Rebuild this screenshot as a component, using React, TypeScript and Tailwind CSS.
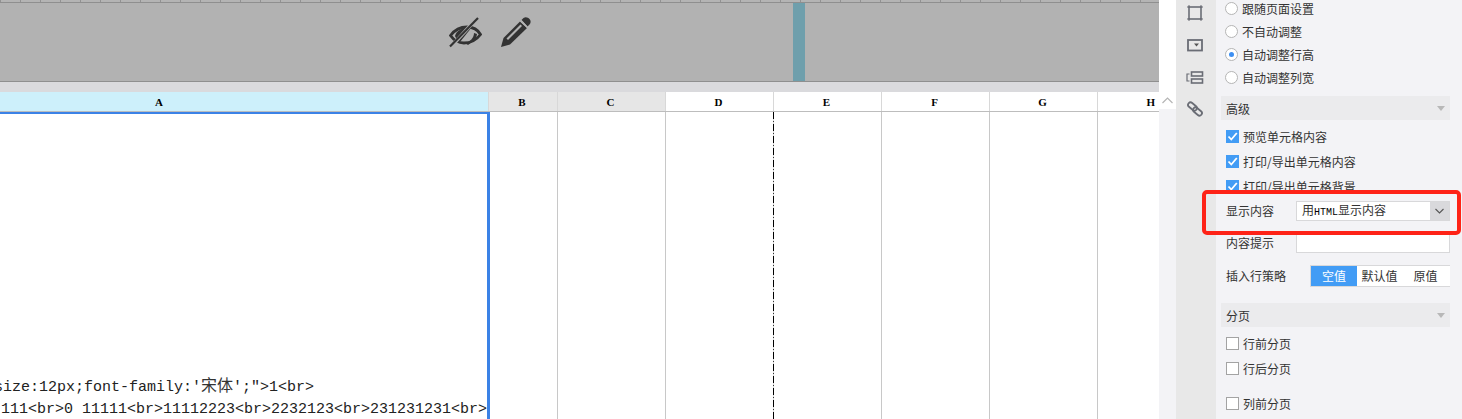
import React from "react";

const mono = "font-['Liberation_Mono','Noto_Sans_CJK_SC',monospace]";
const serif = "font-['Liberation_Serif','Noto_Sans_CJK_SC',serif]";

function Radio({ label, on }: { label: string; on?: boolean }) {
  return (
    <div className="flex h-[23px] items-center">
      <span className="mr-[4px] flex h-[13px] w-[13px] items-center justify-center rounded-full border border-[#b5b5b5] bg-white">
        {on && <span className="h-[5px] w-[5px] rounded-full bg-[#3d8ff2]" />}
      </span>
      <span>{label}</span>
    </div>
  );
}

function Check({ label, on }: { label: string; on?: boolean }) {
  return (
    <div className="flex h-[25px] items-center">
      <span className={`mr-[4px] flex h-[13px] w-[13px] items-center justify-center ${on ? "bg-[#429cf5]" : "border border-[#a3a3a3] bg-white"}`}>
        {on && (
          <svg width="11" height="11" viewBox="0 0 11 11">
            <path d="M1.5 5.5 L4.3 8.5 L9.8 2" fill="none" stroke="#fff" strokeWidth="1.8" />
          </svg>
        )}
      </span>
      <span>{label}</span>
    </div>
  );
}

function Section({ label }: { label: string }) {
  return (
    <div className="flex h-[24px] w-[229px] items-center justify-between bg-[#ebebed] px-[5px]">
      <span className="pt-[1px]">{label}</span>
      <span className="h-0 w-0 border-x-[4px] border-t-[5px] border-x-transparent border-t-[#b8b8b8]" />
    </div>
  );
}

const cols: [string, number, string][] = [
  ["B", 69, "bg-[#e6e6e6]"],
  ["C", 108, "bg-[#e6e6e6]"],
  ["D", 108, "bg-white"],
  ["E", 108, "bg-white"],
  ["F", 108, "bg-white"],
  ["G", 108, "bg-white"],
];

export default function App() {
  return (
    <div className="relative flex h-[419px] w-[1462px] overflow-hidden bg-white font-['Noto_Sans_CJK_SC',sans-serif] text-[12px] text-[#333]">
      {/* Sheet area */}
      <div className="flex w-[1159px] flex-col">
        <div className="h-[3px] border-b border-[#8f8f8f] bg-[repeating-linear-gradient(90deg,#929292_0,#929292_1px,#b4b4b4_1px,#b4b4b4_20px)]" />
        <div className="flex h-[79px] border-b border-[#8f8f8f] bg-[#b2b2b2]">
          <div className="flex w-[793px] items-start pl-[449px] pt-[14px]">
            <svg width="33" height="31" viewBox="0 0 33 31" className="mr-[18px]">
              <path d="M1.5 18.5 C6 12.5 12 10 18 10 C24 10 29 13 31.5 17.5 C27 23.5 22 26 15 26 C9 26 5 23.5 1.5 18.5Z" fill="none" stroke="#333" strokeWidth="2.8" />
              <path d="M6 19 C7 14 13 10 23 10 L11 25 C8 23 7 21 6 19Z" fill="#333" />
              <path d="M16 26 C21 25 25 21 25 16 L28 17 L27 22 L19 28Z" fill="#333" />
              <path d="M-1 33 L30 -1" stroke="#b2b2b2" strokeWidth="3.6" />
              <path d="M1 29.5 L29 1" stroke="#333" strokeWidth="2.2" />
            </svg>
            <svg width="31" height="31" viewBox="0 0 31 31">
              <path d="M1 30 L3.5 21 L20 4.5 L27 11 L10 27.5 Z" fill="#333" />
              <path d="M6.5 21.5 L20.5 7.5 L22 9 L8 23 Z" fill="#b2b2b2" />
              <path d="M21.5 3 L23.5 1 C25.5 -.5 28 .3 29.5 2 C31 3.5 31 6 29.5 7.5 L27.5 9.5 Z" fill="#333" />
              <path d="M20 4.5 L21.5 3 L27.5 9.5 L27 11Z" fill="#b2b2b2" />
            </svg>
          </div>
          <div className="w-[12px] bg-[#6f9fac]" />
          <div className="flex-1" />
        </div>
        <div className="h-[10px] bg-[#dadadd]" />
        <div className={`flex h-[20px] border-b border-[#bdbdbd] text-[11px] font-bold leading-[20px] text-black ${serif}`}>
          <div className="w-[489px] border-r border-[#d8d8d8] bg-[#cdf0fb] pl-[155px]">A</div>
          {cols.map(([name, w, bg]) => (
            <div key={name} style={{ width: w }} className={`${bg} border-r border-[#d8d8d8] pr-[2px] text-center`}>
              {name}
            </div>
          ))}
          <div className="flex-1 pr-[4px] text-right">H</div>
        </div>
        <div className="relative flex flex-1">
          <div className={`flex w-[490px] flex-col justify-end overflow-hidden border-r-[3px] border-t-[2px] border-[#3b82e6] text-[15px] leading-[22px] text-[#222] ${mono}`}>
            <div className="-ml-[6px] whitespace-nowrap">
              size:12px;font-family:'<span className="text-[16px] text-[#333]">宋体</span>';"&gt;1&lt;br&gt;
            </div>
            <div className="-mb-[2px] flex justify-end whitespace-nowrap">
              111&lt;br&gt;0 11111&lt;br&gt;11112223&lt;br&gt;2232123&lt;br&gt;231231231&lt;br&gt;
            </div>
          </div>
          <div className="w-[68px] border-r border-[#c8c8c8]" />
          <div className="w-[108px] border-r border-[#c8c8c8]" />
          <div className="w-[108px] bg-[repeating-linear-gradient(180deg,#000_0,#000_7px,#d8d8d8_7px,#d8d8d8_9px,#333_9px,#333_10px,#d8d8d8_10px,#d8d8d8_12px)] bg-[length:1px_100%] bg-right bg-no-repeat" />
          <div className="w-[108px] border-r border-[#c8c8c8]" />
          <div className="w-[108px] border-r border-[#c8c8c8]" />
          <div className="w-[108px] border-r border-[#c8c8c8]" />
        </div>
      </div>

      {/* Scrollbar */}
      <div className="flex w-[17px] flex-col pt-[92px]">
        <div className="flex h-[17px] items-center justify-center bg-white">
          <svg width="11" height="7" viewBox="0 0 11 7">
            <path d="M.5 6 L5.5 1 L10.5 6" fill="none" stroke="#b5b5b5" strokeWidth="1.2" />
          </svg>
        </div>
        <div className="flex-1 bg-[#f3f3f6]" />
      </div>

      {/* Icon rail */}
      <div className="flex w-[40px] flex-col items-center bg-[#e8e8e8] pr-[2px] pt-[5px]">
        <svg width="16" height="16" viewBox="0 0 16 16" fill="none" stroke="#6a6d75" strokeWidth="1.6">
          <rect x="2" y="2" width="12" height="12" />
          <path d="M0 2h3M13 2h3M0 14h3M13 14h3M2 0v3M14 0v3M2 13v3M14 13v3" strokeWidth="1" />
        </svg>
        <svg width="16" height="13" viewBox="0 0 16 13" className="mt-[18px]">
          <rect x="1" y="1" width="14" height="10.5" fill="none" stroke="#6a6d75" strokeWidth="1.8" />
          <path d="M7 4.5h5l-2.5 3z" fill="#555" />
        </svg>
        <svg width="18" height="13" viewBox="0 0 18 13" fill="none" stroke="#6a6d75" strokeWidth="1.6" className="mt-[19px]">
          <rect x="5.5" y="1" width="11" height="4" />
          <rect x="5.5" y="8" width="11" height="4" />
          <path d="M3.5 3H1v7h2.5" strokeWidth="1.2" />
        </svg>
        <svg width="16" height="16" viewBox="0 0 16 16" fill="none" stroke="#6a6d75" strokeWidth="1.8" className="mt-[17px]">
          <rect x="0.5" y="3" width="10" height="5" rx="2.5" transform="rotate(40 5.5 5.5)" />
          <rect x="5.5" y="8" width="10" height="5" rx="2.5" transform="rotate(40 10.5 10.5)" />
        </svg>
      </div>

      {/* Property panel */}
      <div className="flex flex-1 flex-col bg-[#f3f3f6] pl-[5px] text-[12px] leading-[18px] text-[#333]">
        <div className="-mt-[3px] pl-[4px]">
          <Radio label="跟随页面设置" />
          <Radio label="不自动调整" />
          <Radio label="自动调整行高" on />
          <Radio label="自动调整列宽" />
        </div>
        <div className="mt-[7px]">
          <Section label="高级" />
        </div>
        <div className="mt-[4px] pl-[5px]">
          <Check label="预览单元格内容" on />
          <Check label="打印/导出单元格内容" on />
          <Check label="打印/导出单元格背景" on />
        </div>
        <div className="mt-[2px] flex h-[20px] w-[229px] items-center pl-[5px]">
          <span className="w-[70px]">显示内容</span>
          <div className="flex h-[20px] flex-1 items-center justify-between border border-[#d8d8da] bg-white pl-[5px]">
            <span>
              用<span className={`${mono} text-[10px] text-black`}>HTML</span>显示内容
            </span>
            <span className="flex h-full w-[19px] items-center justify-center bg-[#d9d9dc]">
              <svg width="9" height="6" viewBox="0 0 9 6">
                <path d="M.5 1 L4.5 5 L8.5 1" fill="none" stroke="#555" strokeWidth="1.1" />
              </svg>
            </span>
          </div>
        </div>
        <div className="mt-[12px] flex h-[20px] w-[229px] items-center pl-[5px]">
          <span className="w-[70px]">内容提示</span>
          <div className="h-[20px] flex-1 border border-[#d8d8da] bg-white" />
        </div>
        <div className="mt-[12px] flex h-[22px] w-[229px] items-center pl-[5px]">
          <span className="w-[84px]">插入行策略</span>
          <div className="flex h-[22px] flex-1 border-y border-l border-[#d8d8da] bg-white text-center leading-[20px]">
            <span className="w-[46px] bg-[#429cf5] text-white">空值</span>
            <span className="w-[45px]">默认值</span>
            <span className="flex-1 pr-[1px]">原值</span>
          </div>
        </div>
        <div className="mt-[16px]">
          <Section label="分页" />
        </div>
        <div className="mt-[4px] pl-[5px]">
          <Check label="行前分页" />
          <Check label="行后分页" />
          <div className="mt-[10px]">
            <Check label="列前分页" />
          </div>
        </div>
      </div>

      {/* Red annotation */}
      <div className="absolute left-[1202px] top-[190px] h-[45px] w-[259px] rounded-[5px] border-[4px] border-[#fe2317]" />
    </div>
  );
}
